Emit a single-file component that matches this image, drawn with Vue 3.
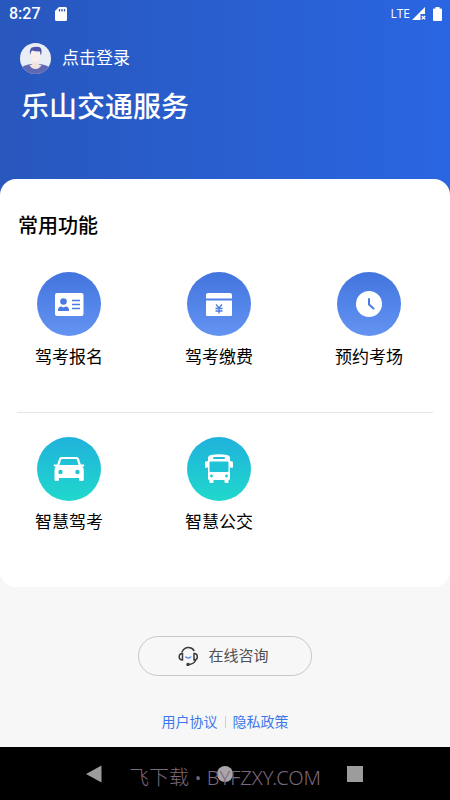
<script setup>
const examServices = [
  { name: '驾考报名', icon: 'card' },
  { name: '驾考缴费', icon: 'pay' },
  { name: '预约考场', icon: 'clock' }
]
const smartServices = [
  { name: '智慧驾考', icon: 'car' },
  { name: '智慧公交', icon: 'bus' }
]
const groups = [
  { tone: 'blue', items: examServices },
  { tone: 'teal', items: smartServices }
]
</script>

<template>
  <div class="screen">
    <header class="hero">
      <div class="status">
        <span class="time">8:27</span>
        <svg class="sd" width="12" height="14" viewBox="0 0 12 14">
          <path d="M4 0h6.500Q12 0 12 1.500v11Q12 14 10.500 14h-9Q0 14 0 12.500V4z" fill="#fff" />
          <path d="M4.500 2v2.500M7 2v2.500M9.500 2v2.500" stroke="#2a5ac4" stroke-width="1.300" />
        </svg>
        <span class="network">LTE</span>
        <svg class="signal" width="14" height="13" viewBox="0 0 14 13">
          <path d="M0 13 13 0v7H8.500v6z" fill="#fff" />
          <path d="M9.800 9l3.400 3.400m0-3.400-3.400 3.400" stroke="#fff" stroke-width="1.300" />
        </svg>
        <svg width="9" height="14" viewBox="0 0 9 14">
          <path d="M2.500 0h4v1.500H8q1 0 1 1V13q0 1-1 1H1q-1 0-1-1V2.500q0-1 1-1h1.500z" fill="#fff" />
        </svg>
      </div>
      <button class="login" type="button">
        <svg width="31" height="31" viewBox="0 0 31 31">
          <defs>
            <clipPath id="face"><circle cx="15.500" cy="15.500" r="15.500" /></clipPath>
          </defs>
          <g clip-path="url(#face)">
            <rect width="31" height="31" fill="#e9edf6" />
            <path d="M0 31V26Q3 22 11 21h9q8 1 11 5v5z" fill="#6068b4" />
            <path d="M12.500 16h6v5q1 1 3 1-2 4-6 4t-6-4q2 0 3-1z" fill="#f1e2e0" />
            <path d="M10.500 9h10v4q-1 6-5 6t-5-6z" fill="#fbeeea" />
            <path d="M10 12Q9 4 14 4q7-1.500 7.500 3 .5 3-.8 5.500L20 8.500q-5 0-8-1L11 9z" fill="#4c55a8" />
          </g>
        </svg>
        <span>点击登录</span>
      </button>
      <h1>乐山交通服务</h1>
    </header>

    <main class="card">
      <h2>常用功能</h2>
      <div v-for="group in groups" :key="group.tone" class="group">
        <button v-for="item in group.items" :key="item.name" class="service" type="button">
          <span class="disc" :class="group.tone">
            <svg v-if="item.icon === 'card'" width="64" height="64" viewBox="0 0 64 64">
              <rect x="18" y="21" width="28.500" height="23" rx="2" fill="#fff" />
              <g fill="#4a7be4">
                <circle cx="26.500" cy="29.500" r="3.300" />
                <path d="M21 39v-1q0-3.500 3.500-3.500l2 1 2-1Q32 34.500 32 38v1z" />
              </g>
              <path d="M35 28.500h8M35 32.500h8M35 36.500h8" stroke="#4a7be4" stroke-width="1.500" />
            </svg>
            <svg v-else-if="item.icon === 'pay'" width="64" height="64" viewBox="0 0 64 64">
              <path d="M19 26.500V23q0-2 2-2h22q2 0 2 2v3.500zM19 28.500h26V43q0 1-1 1H20q-1 0-1-1z" fill="#fff" />
              <path d="M29 32.500l3 3.500 3-3.500M28.500 36.500h7M28.500 39h7M32 36v5.500" fill="none" stroke="#4a7be4" stroke-width="1.300" />
            </svg>
            <svg v-else-if="item.icon === 'clock'" width="64" height="64" viewBox="0 0 64 64">
              <circle cx="32" cy="32" r="13" fill="#fff" />
              <path d="M32 27v5.500l4.500 4" fill="none" stroke="#4a7be4" stroke-width="2" stroke-linecap="round" stroke-linejoin="round" />
            </svg>
            <svg v-else-if="item.icon === 'car'" width="64" height="64" viewBox="0 0 64 64">
              <path fill="#fff" fill-rule="evenodd" d="M24.500 20h15q2 0 2.600 2l1.700 5.500h2.700q.8 0 .8 1t-.8 1h-1.200q1.500 1.300 1.500 3.500v9.500q0 1.500-1.500 1.500h-1.800q-1.500 0-1.500-1.500V41H22v1.500q0 1.500-1.500 1.500h-1.500q-1.500 0-1.500-1.500V33q0-2.200 1.500-3.500h-1.500q-.8 0-.8-1t.8-1h2.700L22 22q.6-2 2.500-2zM25 22q-.8 0-1 .7L22.500 28h19l-1.600-5.300q-.2-.7-.9-.7z" />
              <circle cx="23.500" cy="35" r="2.200" fill="#20c4d4" />
              <circle cx="40.500" cy="35" r="2.200" fill="#20c4d4" />
            </svg>
            <svg v-else width="64" height="64" viewBox="0 0 64 64">
              <path fill="#fff" d="M21 24v-3q0-2.500 3-3 8-1.500 16 0 3 .5 3 3v3q3 0 3 1.500V30q0 1-1.500 1L43 30v11.500q0 1.500-1.500 1.500v2q0 1-1 1h-2q-1 0-1-1v-2h-11v2q0 1-1 1h-2q-1 0-1-1v-2Q21 43 21 41.500V30l-1.500 1Q18 31 18 30v-4.500q0-1.500 3-1.500z" />
              <rect x="26" y="20" width="12" height="2" rx="1" fill="#20bbd8" />
              <rect x="22.500" y="24.500" width="19" height="10.500" rx="1" fill="#20c3d5" />
              <circle cx="24.500" cy="39" r="1.400" fill="#20cbd3" />
              <circle cx="39.500" cy="39" r="1.400" fill="#20cbd3" />
            </svg>
          </span>
          <span class="label">{{ item.name }}</span>
        </button>
      </div>
    </main>

    <footer class="foot">
      <button class="consult" type="button">
        <svg width="20" height="20" viewBox="0 0 20 20" fill="none" stroke="#3c3c3c" stroke-width="1.500" stroke-linecap="round">
          <path d="M4 6Q6 1.500 10.500 1.500 14 1.500 16 4.500M17.500 14.500Q16 18 10.500 18.500" />
          <path d="M4.500 7.500v6.500Q1.200 14 1.200 10.800T4.500 7.500zM16 7.500v6.500q3.300 0 3.300-3.200T16 7.500z" />
          <circle cx="10" cy="18.400" r="1" fill="#3c3c3c" />
          <path d="M7.800 11q2.500 2 5 0" stroke="#5c96ec" />
        </svg>
        <span>在线咨询</span>
      </button>
      <nav class="legal" aria-label="协议">
        <a href="#terms">用户协议</a>
        <span class="bar"></span>
        <a href="#privacy">隐私政策</a>
      </nav>
    </footer>

    <div class="system">
      <button type="button" aria-label="返回">
        <svg width="18" height="18" viewBox="0 0 18 18"><path d="M1 9 16.500 .5v17z" fill="#9c9c9c" /></svg>
      </button>
      <button type="button" aria-label="主屏幕">
        <svg width="18" height="18" viewBox="0 0 18 18"><circle cx="9" cy="9" r="8" fill="#aaa5aa" /></svg>
      </button>
      <button type="button" aria-label="最近任务">
        <svg width="18" height="18" viewBox="0 0 18 18"><rect x="1" y="1" width="16" height="16" fill="#9c9c9c" /></svg>
      </button>
      <span class="mark">飞下载 • BYFZXY.COM</span>
    </div>
  </div>
</template>

<style>
body {
  margin: 0;
  background: #f7f7f7;
}
</style>

<style scoped>
.screen {
  display: flex;
  flex-direction: column;
  min-height: 100vh;
  background: #f7f7f7;
  font-family: Roboto, "Noto Sans CJK SC", sans-serif;
  color: #000;
}
button {
  padding: 0;
  border: 0;
  background: none;
  color: inherit;
  font: inherit;
  cursor: pointer;
}
svg {
  display: block;
}
.hero {
  padding-bottom: 70px;
  background: linear-gradient(90deg, #2857bd, #2a66e2);
  color: #fff;
}
.status {
  display: flex;
  align-items: center;
  height: 27px;
  padding: 0 8px 0 9px;
}
.time {
  font-size: 16px;
  font-weight: 500;
}
.sd {
  margin-left: 14px;
}
.network {
  margin-left: auto;
  font-family: "Open Sans", sans-serif;
  font-size: 12px;
}
.signal {
  margin: 0 7px 0 2px;
}
.login {
  display: flex;
  align-items: center;
  gap: 11px;
  height: 31px;
  margin: 16px 20px 0;
  font-size: 17px;
}
.login span,
.consult span {
  padding-bottom: 4px;
}
h1 {
  margin: 14px 21px 0;
  font-size: 28px;
  font-weight: 500;
  line-height: 40px;
}
.card {
  margin-top: -19px;
  padding: 33px 17px 52px;
  border-radius: 16px;
  background: #fff;
}
h2 {
  margin: 0 0 32px 1px;
  font-size: 20px;
  font-weight: 500;
  line-height: 28px;
}
.group {
  display: grid;
  grid-template-columns: repeat(3, 70px);
  justify-content: space-between;
  padding: 0 29px 0 17px;
}
.group + .group {
  margin-top: 42px;
  padding-top: 24px;
  border-top: 1px solid #e4e4e4;
}
.service {
  display: flex;
  flex-direction: column;
  align-items: center;
  gap: 8px;
}
.disc {
  border-radius: 50%;
}
.blue {
  background: linear-gradient(#4274de, #6394f2);
}
.teal {
  background: linear-gradient(#20b2dc, #20d8cc);
}
.label {
  font-size: 17px;
  line-height: 26px;
  white-space: nowrap;
}
.foot {
  display: flex;
  flex: 1;
  flex-direction: column;
  align-items: center;
  padding: 49px 0 13px;
}
.consult {
  display: flex;
  align-items: center;
  justify-content: center;
  gap: 10px;
  width: 174px;
  height: 40px;
  padding-right: 3px;
  border: 1px solid #c8c8c8;
  border-radius: 20px;
  color: #505050;
  font-size: 15px;
}
.legal {
  display: flex;
  align-items: center;
  gap: 7px;
  margin-top: auto;
  font-size: 14px;
  line-height: 24px;
}
.legal a {
  color: #3d78ea;
  text-decoration: none;
}
.bar {
  width: 1px;
  height: 12px;
  background: #d0d0d0;
}
.system {
  position: relative;
  display: flex;
  align-items: center;
  justify-content: space-between;
  height: 53px;
  padding: 0 86px 0 85px;
  background: #000;
}
.mark {
  position: absolute;
  inset: 9px 0 0;
  color: #7c687c;
  font-family: "Noto Sans", "Noto Sans CJK SC", sans-serif;
  font-size: 20px;
  font-weight: 300;
  line-height: 44px;
  text-align: center;
  pointer-events: none;
}
</style>
